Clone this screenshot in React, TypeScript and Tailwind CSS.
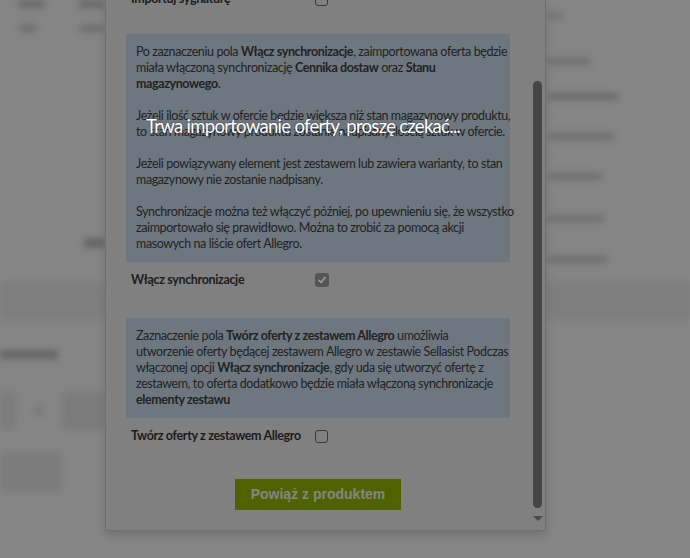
import React from 'react';

const font = { fontFamily: 'Lato, "Liberation Sans", sans-serif' };

function Checkbox({ checked }: { checked?: boolean }) {
  if (checked) {
    return (
      <span className="flex h-[14px] w-[14px] items-center justify-center rounded-[3px] bg-[#555555]">
        <svg viewBox="0 0 12 12" className="h-[10px] w-[10px]" fill="none" stroke="#9a9a9a" strokeWidth="2" strokeLinecap="round" strokeLinejoin="round">
          <path d="M2.5 6.5 L5 9 L9.5 3" />
        </svg>
      </span>
    );
  }
  return <span className="block h-[13px] w-[13px] rounded-[3px] border border-[#3a3a3a]" />;
}

function Row({ label, checked }: { label: string; checked?: boolean }) {
  return (
    <div className="flex h-[16px] items-center pl-[25px]">
      <span className="w-[184px] whitespace-nowrap text-[12.5px] font-bold tracking-[-0.35px] text-[#1c1c1c]">{label}</span>
      <Checkbox checked={checked} />
    </div>
  );
}

const infoBox =
  'mx-[20px] bg-[#6e7780] px-[10px] py-[10px] text-[12.5px] leading-[16px] tracking-[-0.4px] text-[#222222] whitespace-nowrap';

export default function App() {
  return (
    <div className="relative h-[558px] w-[690px] overflow-hidden bg-[#858585]" style={font}>
      {/* blurred page behind the overlay */}
      <div className="flex h-full blur-[3px]">
        <div className="flex w-[105px] flex-col">
          <div className="flex gap-[34px] pl-[18px]">
            <div className="h-[8px] w-[28px] bg-[#6a6a6a]" />
            <div className="h-[8px] w-[26px] bg-[#6a6a6a]" />
          </div>
          <div className="mt-[17px] flex gap-[44px] pl-[20px]">
            <div className="h-[7px] w-[16px] bg-[#6d6d6d]" />
            <div className="h-[7px] w-[24px] bg-[#6d6d6d]" />
          </div>
          <div className="ml-[84px] mt-[206px] h-[10px] w-[21px] bg-[#666666]" />
          <div className="mt-[34px] h-[38px] bg-[#7e7e7e]" />
          <div className="mt-[30px] h-[9px] w-[58px] bg-[#666666]" />
          <div className="mt-[33px] flex items-center gap-[20px]">
            <div className="h-[36px] w-[16px] bg-[#7c7c7c]" />
            <div className="h-[6px] w-[6px] bg-[#6e6e6e]" />
            <div className="h-[38px] flex-1 bg-[#7b7b7b]" />
          </div>
          <div className="mt-[22px] h-[40px] w-[62px] bg-[#7c7c7c]" />
        </div>
        <div className="w-[440px]" />
        <div className="flex flex-1 flex-col pl-[3px]">
          <div className="mt-[13px] h-[6px] w-[14px] bg-[#707070]" />
          <div className="mt-[39px] h-[7px] w-[42px] bg-[#6f6f6f]" />
          <div className="mt-[28px] h-[7px] w-[70px] bg-[#6a6a6a]" />
          <div className="mt-[33px] h-[7px] w-[66px] bg-[#6f6f6f]" />
          <div className="mt-[33px] h-[7px] w-[54px] bg-[#6f6f6f]" />
          <div className="mt-[35px] h-[7px] w-[56px] bg-[#6f6f6f]" />
          <div className="mt-[34px] h-[7px] w-[60px] bg-[#6f6f6f]" />
          <div className="-ml-[3px] mt-[19px] h-[38px] bg-[#7e7e7e]" />
        </div>
      </div>

      {/* modal */}
      <div className="absolute left-[105px] top-0 flex h-[531px] w-[441px] border-x border-b border-[#6f6f6f] bg-[#808080] shadow-[0_4px_8px_rgba(0,0,0,0.15)]">
        <div className="flex-1 overflow-hidden">
          <div className="-mt-[9px] flex flex-col">
            <Row label="Importuj sygnaturę" />

            <div className={`${infoBox} mt-[27px]`}>
              <p>
                Po zaznaczeniu pola <b>Włącz synchronizacje</b>, zaimportowana oferta będzie<br />
                miała włączoną synchronizację <b>Cennika dostaw</b> oraz <b>Stanu</b><br />
                <b>magazynowego</b>.
              </p>
              <p className="mt-[16px]">
                Jeżeli ilość sztuk w ofercie będzie większa niż stan magazynowy produktu,<br />
                to stan magazynowy produktu zostanie nadpisany ilością sztuk w ofercie.
              </p>
              <p className="mt-[16px]">
                Jeżeli powiązywany element jest zestawem lub zawiera warianty, to stan<br />
                magazynowy nie zostanie nadpisany.
              </p>
              <p className="mt-[16px]">
                Synchronizacje można też włączyć później, po upewnieniu się, że wszystko<br />
                zaimportowało się prawidłowo. Można to zrobić za pomocą akcji<br />
                masowych na liście ofert Allegro.
              </p>
            </div>

            <div className="mt-[10px]">
              <Row label="Włącz synchronizacje" checked />
            </div>

            <div className={`${infoBox} mt-[30px]`}>
              <p>
                Zaznaczenie pola <b>Twórz oferty z zestawem Allegro</b> umożliwia<br />
                utworzenie oferty będącej zestawem Allegro w zestawie Sellasist Podczas<br />
                włączonej opcji <b>Włącz synchronizacje</b>, gdy uda się utworzyć ofertę z<br />
                zestawem, to oferta dodatkowo będzie miała włączoną synchronizacje<br />
                <b>elementy zestawu</b>
              </p>
            </div>

            <div className="mt-[10px]">
              <Row label="Twórz oferty z zestawem Allegro" />
            </div>

            <div className="mt-[35px] flex justify-center">
              <button
                className="h-[31px] w-[166px] bg-[#4e6300] text-[14px] font-bold text-[#858585]"
                style={{ fontFamily: '"Liberation Sans", Arial, sans-serif' }}
              >
                Powiąż z produktem
              </button>
            </div>
          </div>
        </div>

        {/* scrollbar */}
        <div className="flex w-[15px] flex-col items-center">
          <div className="mt-[81px] h-[427px] w-[9px] rounded-full bg-[#454545]" />
          <div className="mt-[8px] h-0 w-0 border-x-[5px] border-t-[5px] border-x-transparent border-t-[#4a4a4a]" />
        </div>
      </div>

      {/* loading message over the overlay */}
      <div className="absolute left-[146px] top-[113px] whitespace-nowrap text-[18.5px] leading-[26px] tracking-[-0.7px] text-white [text-shadow:0_0_2px_rgba(0,0,0,0.5)]">
        Trwa importowanie oferty, proszę czekać...
      </div>
    </div>
  );
}
